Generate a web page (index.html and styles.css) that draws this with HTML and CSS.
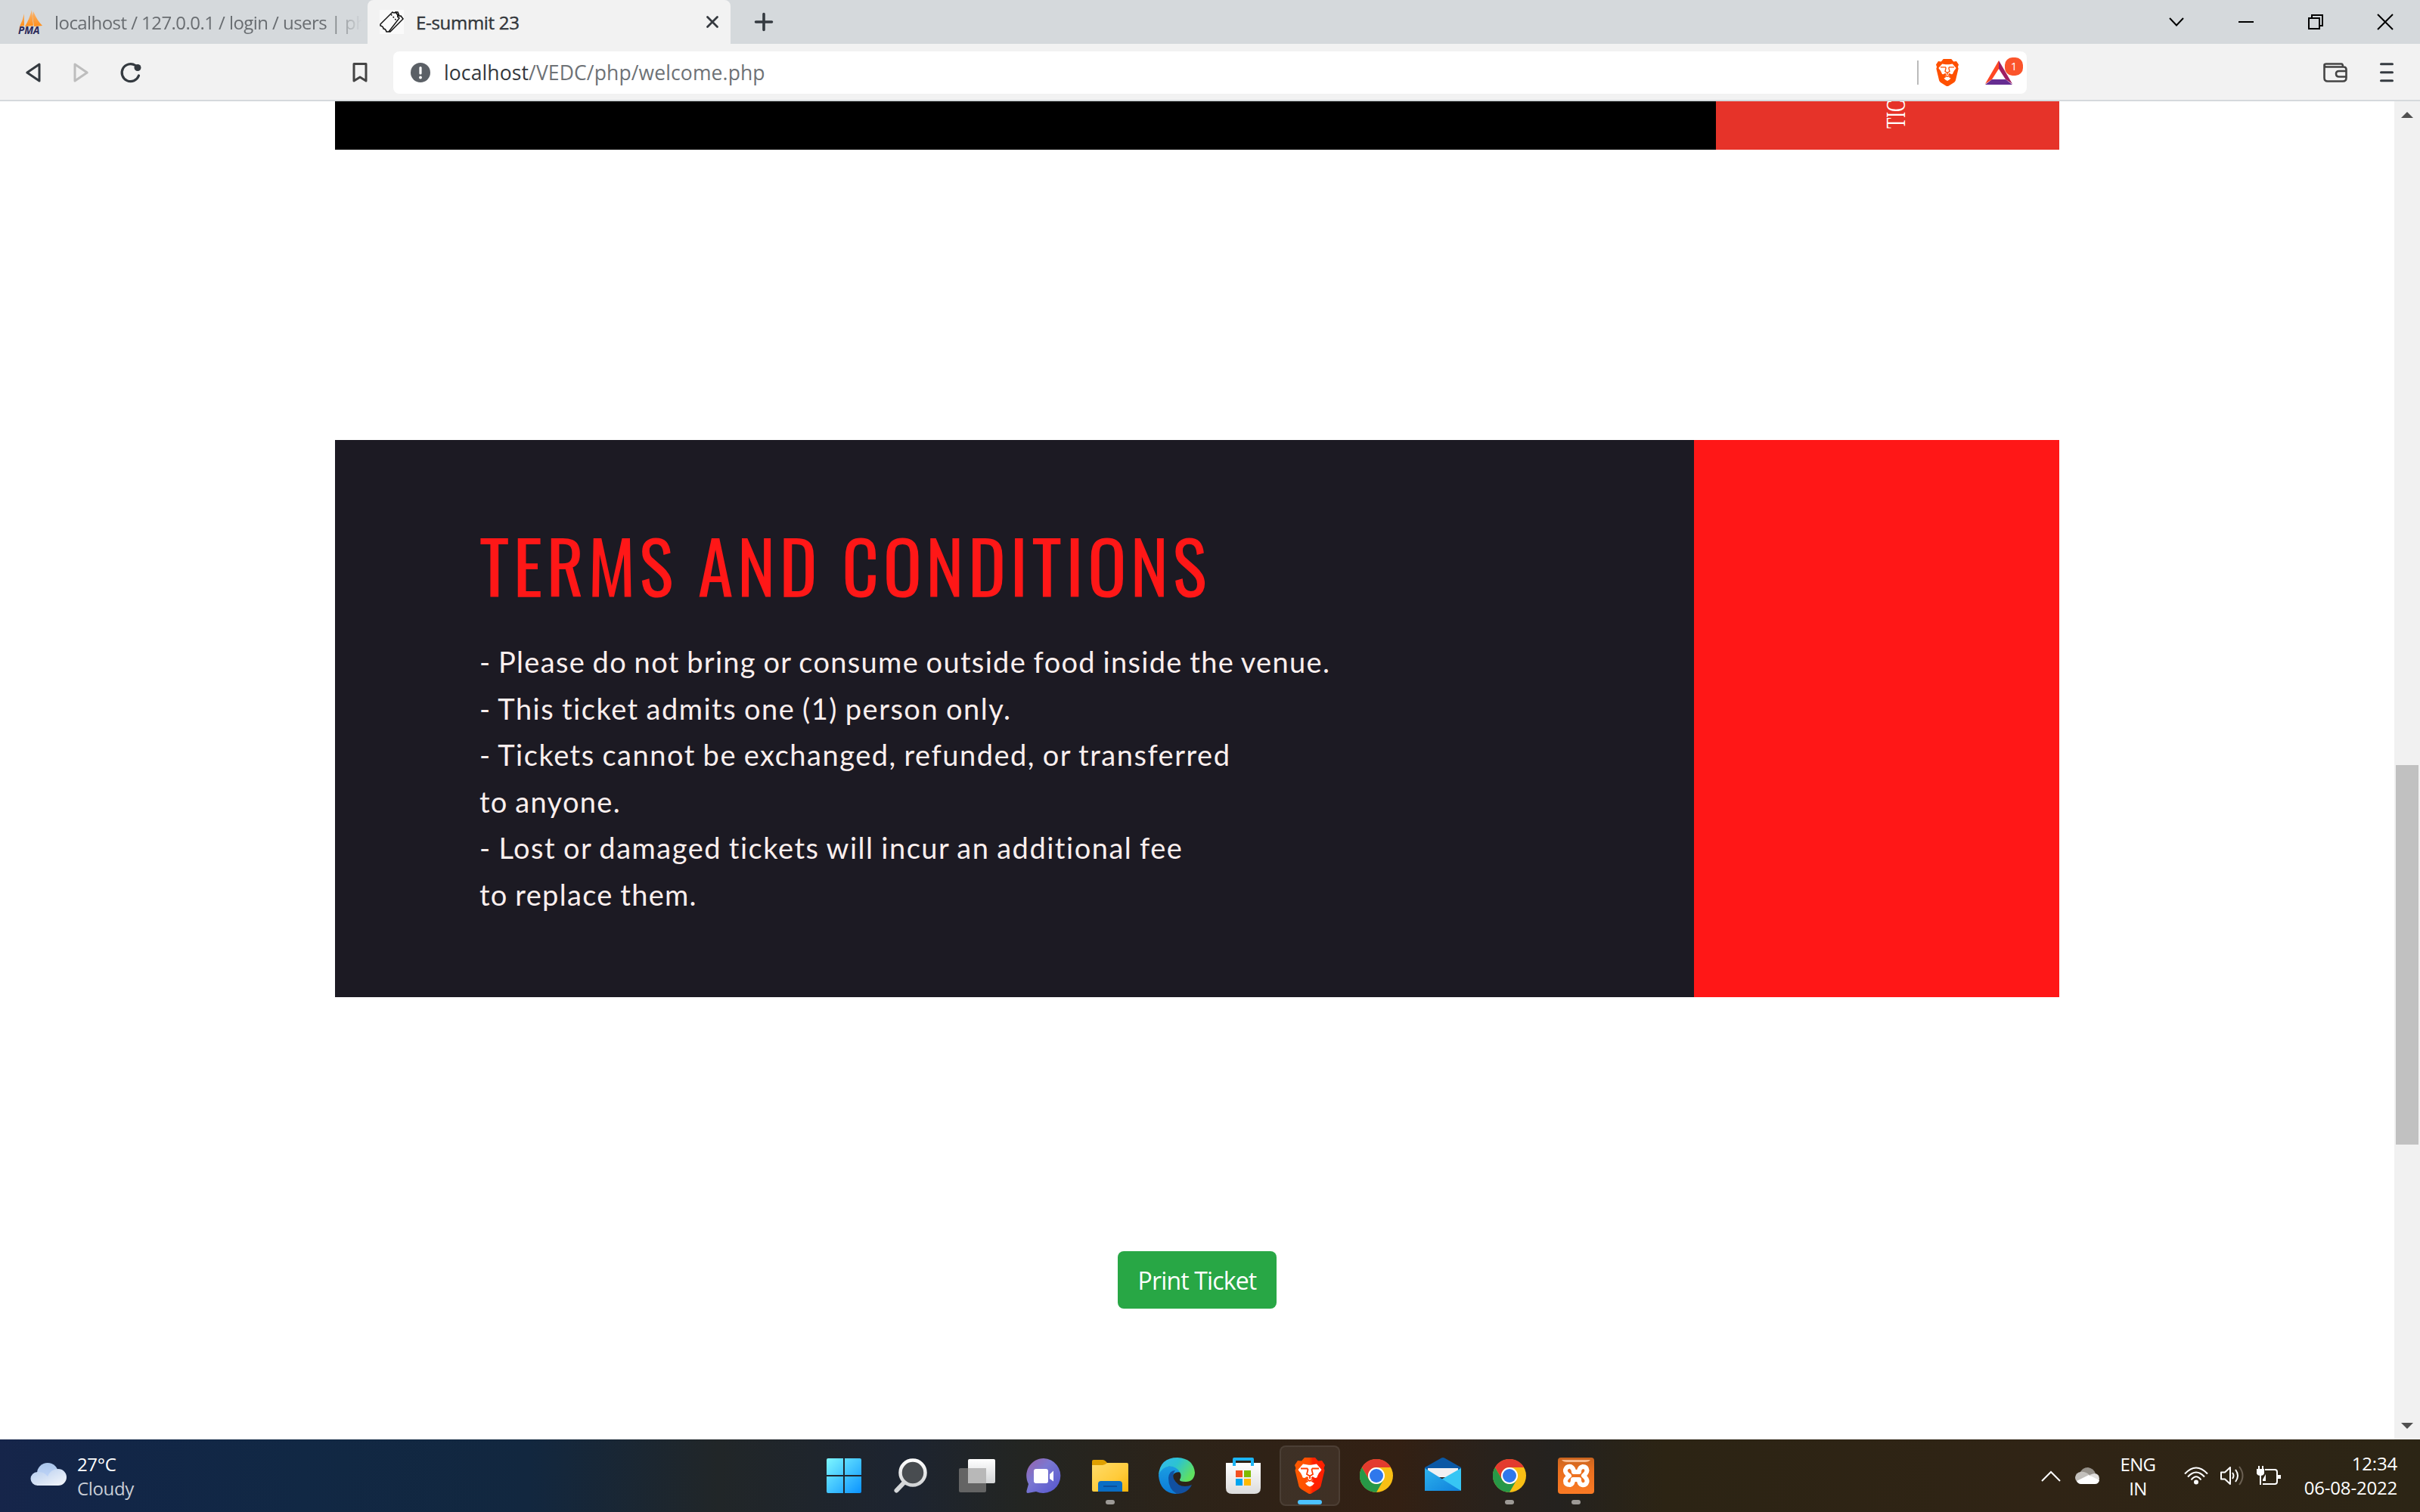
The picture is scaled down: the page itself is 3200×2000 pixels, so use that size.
FILE: index.html
```
<!DOCTYPE html>
<html lang="en">
<head>
<meta charset="utf-8">
<title>E-summit 23</title>
<link rel="stylesheet" href="styles.css">
</head>
<body>
<svg width="0" height="0" class="defs">
  <defs>
    <linearGradient id="gWin" x1="0" y1="0" x2="1" y2="1"><stop offset="0" stop-color="#7df7ff"/><stop offset="1" stop-color="#0a93ff"/></linearGradient>
    <linearGradient id="gLens" x1="0" y1="0" x2="0" y2="1"><stop offset="0" stop-color="#fff"/><stop offset="1" stop-color="#d2d4d6"/></linearGradient>
    <linearGradient id="gChat" x1="0" y1="0" x2="1" y2="1"><stop offset="0" stop-color="#9a61a8"/><stop offset=".4" stop-color="#7b78d2"/><stop offset="1" stop-color="#5354cf"/></linearGradient>
    <linearGradient id="gFold" x1="0" y1="0" x2="1" y2="1"><stop offset="0" stop-color="#ffdc6a"/><stop offset=".6" stop-color="#ffcb3a"/><stop offset="1" stop-color="#f9b40a"/></linearGradient>
    <linearGradient id="gEdgeTop" x1="0" y1="0" x2="1" y2=".5"><stop offset="0" stop-color="#35b8f1"/><stop offset=".5" stop-color="#2cc3d2"/><stop offset="1" stop-color="#5fe060"/></linearGradient>
    <linearGradient id="gEdgeBot" x1="0" y1="0" x2="0" y2="1"><stop offset="0" stop-color="#1b9de2"/><stop offset="1" stop-color="#0b7bd8"/></linearGradient>
    <linearGradient id="gBag" x1="0" y1="0" x2="0" y2="1"><stop offset="0" stop-color="#fff"/><stop offset="1" stop-color="#dcdcdc"/></linearGradient>
    <linearGradient id="gBrave" x1="0" y1="0" x2="1" y2="0"><stop offset="0" stop-color="#ff5a00"/><stop offset=".48" stop-color="#ff4d00"/><stop offset=".6" stop-color="#ff2000"/><stop offset="1" stop-color="#ff2000"/></linearGradient>
    <linearGradient id="gMail" x1="0" y1="0" x2="1" y2="1"><stop offset="0" stop-color="#2db2ec"/><stop offset="1" stop-color="#0f80dc"/></linearGradient>
    <linearGradient id="gXampp" x1="0" y1="0" x2="0" y2="1"><stop offset="0" stop-color="#c9641f"/><stop offset=".35" stop-color="#e96f1f"/><stop offset="1" stop-color="#fb7a24"/></linearGradient>
    <linearGradient id="gCloud" x1="0" y1="0" x2="1" y2="1"><stop offset="0" stop-color="#b3cbee"/><stop offset="1" stop-color="#f6f8fb"/></linearGradient>
    <linearGradient id="gCloudB" x1="0" y1="0" x2="0" y2="1"><stop offset="0" stop-color="#a9c5ea"/><stop offset="1" stop-color="#c9dbff"/></linearGradient>
    <linearGradient id="gSail" x1="0" y1="0" x2="0" y2="1"><stop offset="0" stop-color="#f8b877"/><stop offset="1" stop-color="#ff8f1c"/></linearGradient>
    <symbol id="lion" viewBox="0 0 40 48">
      <path d="M13 0H27L31 4.500L36 4L40 10L38.500 14L39.500 17L34.500 38Q33.500 40.500 31 42L22 47.500Q20 48.500 18 47.500L9 42Q6.500 40.500 5.500 38L.5 17L1.500 14L0 10L4 4L9 4.500Z"/>
      <path fill="#fff" d="M11 8.500L17 9.500Q20 10 23 9.500L29 8.500L35.500 16Q34.500 18 32 20.500L30 24.500Q30 27 27 27L23.500 25L21.500 27L24.500 29.500L20 32.500L15.500 29.500L18.500 27L16.500 25L13 27Q10 27 10 24.500L8 20.500Q5.500 18 4.500 16ZM20 30.500L26 34Q24 37 20 38.500Q16 37 14 34Z"/>
      <path fill="none" stroke="currentColor" stroke-width="1.800" d="M8 14.500L16.500 14.500L17.500 16L16 22L20 24.500L24 22L22.500 16L23.500 14.500L32 14.500M20 24V28M16 28.500L20 31L24 28.500"/>
    </symbol>
    <symbol id="chrome" viewBox="0 0 44 44">
      <circle cx="22" cy="22" r="22" fill="#f9bf14"/>
      <path fill="#e33b2e" d="M2.900 11A22 22 0 0 1 41.100 11H22A11 11 0 0 0 12.500 27.500Z"/>
      <path fill="#279847" d="M2.900 11A22 22 0 0 0 22 44L31.500 27.500A11 11 0 0 1 12.500 27.500Z"/>
      <circle cx="22" cy="22" r="11" fill="#fff"/><circle cx="22" cy="22" r="9" fill="#2f78ec"/>
    </symbol>
  </defs>
</svg>

<header class="tabstrip">
  <div class="tab tab-idle">
    <svg class="favicon" viewBox="0 0 32 32">
      <path fill="url(#gSail)" d="M7 5L7 21L1 22Q5 14 7 5ZM17 0L19 21L8 22Q14 12 17 0ZM19 2Q24 14 31 21L20 22L18 8ZM20 11L25 21L21 22Z"/>
    </svg>
    <span class="pma">PMA</span>
    <span class="tab-title faded">localhost / 127.0.0.1 / login / users | ph</span>
  </div>
  <div class="tab tab-active">
    <svg class="ticket-icon" viewBox="0 0 32 32" fill="none" stroke="#111" stroke-width="1.500">
      <path stroke="none" fill="#fafafa" d="M0 0H32V32H0Z"/>
      <path d="M1 19L17 3Q19 5 21 3L24 7Q23 10 26 11L12 29L9 29Q8 25 5 25Q5 22 1 21ZM24 7Q26 9 28 8L31 12L14 29H11M21 3L24 3L26 8"/>
      <path stroke-dasharray="2 2" d="M15 6L22 14"/>
    </svg>
    <span class="tab-title">E-summit 23</span>
    <svg class="tab-close" viewBox="0 0 16 16"><path d="M1.500 1.500L14.500 14.500M14.500 1.500L1.500 14.500" stroke="#35393f" stroke-width="2.800" stroke-linecap="round"/></svg>
  </div>
  <svg class="new-tab" viewBox="0 0 24 24"><path d="M12 1.500V22.500M1.500 12H22.500" stroke="#343a40" stroke-width="3.600" stroke-linecap="round"/></svg>
  <div class="window-buttons">
    <svg width="20" height="22" viewBox="0 0 20 22" fill="none" stroke="#000" stroke-width="2"><path d="M1 6L10 15.500L19 6"/></svg>
    <svg width="20" height="22" viewBox="0 0 20 22"><path d="M0 10H20V12H0Z"/></svg>
    <svg width="20" height="22" viewBox="0 0 20 22" fill="none" stroke="#000" stroke-width="2"><path d="M1 6H15V20H1ZM5 6V2H19V16H15"/></svg>
    <svg width="20" height="22" viewBox="0 0 20 22" stroke="#000" stroke-width="2"><path d="M0 1L20 21M20 1L0 21"/></svg>
  </div>
</header>

<nav class="toolbar">
  <div class="nav-buttons">
    <svg width="20" height="26" viewBox="0 0 20 26" fill="none" stroke="#343a40" stroke-width="3" stroke-linejoin="round"><path d="M18 2V24L1.800 13Z"/></svg>
    <svg width="20" height="26" viewBox="0 0 20 26" fill="none" stroke="#bdbdbd" stroke-width="3" stroke-linejoin="round"><path d="M2 2V24L18.200 13Z"/></svg>
    <svg width="28" height="26" viewBox="0 0 28 26"><path d="M20 3.500A11.500 11.500 0 1 0 24.500 17" fill="none" stroke="#343a40" stroke-width="3.200" stroke-linecap="round"/><circle cx="23" cy="6.500" r="4.500" fill="#343a40"/></svg>
  </div>
  <svg class="bookmark" viewBox="0 0 20 26" fill="none" stroke="#444" stroke-width="3" stroke-linejoin="round"><path d="M2 1.500H18V24L10 19L2 24Z"/></svg>
  <div class="address">
    <svg class="info" viewBox="0 0 26 26"><circle cx="13" cy="13" r="13" fill="#5b6066"/><path d="M13 6.500V14" stroke="#fff" stroke-width="3.200" stroke-linecap="round"/><circle cx="13" cy="19.500" r="1.900" fill="#fff"/></svg>
    <span class="url">localhost<span class="url-path">/VEDC/php/welcome.php</span></span>
    <span class="divider"></span>
    <svg class="shield" viewBox="0 0 40 48" fill="#ff5000" color="#ff5000"><use href="#lion"/></svg>
    <div class="rewards">
      <svg width="36" height="32" viewBox="0 0 36 32"><path fill="#ff4724" d="M18 0L0 31L9 25L18 11Z"/><path fill="#9e1f63" d="M18 0L36 31L27 25L18 11Z"/><path fill="#662d91" d="M0 32L9 25H27L36 32Z"/></svg>
      <span class="badge">1</span>
    </div>
  </div>
  <svg class="wallet" viewBox="0 0 32 26" fill="none" stroke="#444" stroke-width="2.600" stroke-linejoin="round"><path d="M1.500 3V20Q1.500 24.500 6 24.500H26Q30.500 24.500 30.500 20V9Q30.500 5.500 27 5.500H3.500Q1.500 5 1.500 3Q1.500 1.500 4 1.500H24Q26 1.500 26 5M30.500 11H21Q17 11 17 14.500Q17 18.500 21 18.500H30.500"/></svg>
  <svg class="menu" viewBox="0 0 18 26"><path d="M1.500 1.800H16.500M1.500 12.800H16.500M1.500 23.800H16.500" stroke="#343a40" stroke-width="3" stroke-linecap="round"/></svg>
</nav>

<div class="viewport">
  <main class="page">
    <section class="ticket-front">
      <div class="ticket-stub"><span class="stub-text">TICKET</span></div>
    </section>
    <section class="ticket-back">
      <div class="terms">
        <h1 class="terms-title">TERMS AND CONDITIONS</h1>
        <p class="line wide-line">- Please do not bring or consume outside food inside the venue.</p>
        <p class="line">- This ticket admits one (1) person only.</p>
        <p class="line">- Tickets cannot be exchanged, refunded, or transferred</p>
        <p class="line wide-line">to anyone.</p>
        <p class="line">- Lost or damaged tickets will incur an additional fee</p>
        <p class="line wide-line">to replace them.</p>
      </div>
    </section>
    <button class="print">Print Ticket</button>
  </main>
  <aside class="scrollbar">
    <svg width="16" height="8" viewBox="0 0 16 8"><path fill="#505050" d="M0 8L8 0L16 8Z"/></svg>
    <div class="thumb"></div>
    <svg width="16" height="8" viewBox="0 0 16 8"><path fill="#505050" d="M0 0L8 8L16 0Z"/></svg>
  </aside>
</div>

<footer class="taskbar">
  <div class="weather">
    <svg width="48" height="30" viewBox="0 0 48 30"><circle cx="23" cy="14" r="14" fill="url(#gCloudB)"/><path fill="url(#gCloud)" d="M9.500 30A9 9 0 0 1 9.500 12Q18 11 23 18Q27 8 37 8A11 11 0 0 1 37 30Z"/></svg>
    <div class="stack"><span>27°C</span><span class="dim">Cloudy</span></div>
  </div>
  <div class="apps">
    <div class="app"><svg width="46" height="46" viewBox="0 0 46 46"><path fill="url(#gWin)" d="M2 0H22V22H0V2Q0 0 2 0ZM24 0H44Q46 0 46 2V22H24ZM0 24H22V46H2Q0 46 0 44ZM24 24H46V44Q46 46 44 46H24Z"/></svg></div>
    <div class="app"><svg width="46" height="46" viewBox="0 0 46 46"><path d="M4.500 42.500L14 32.500" stroke="#d5d7d9" stroke-width="6" stroke-linecap="round"/><circle cx="26" cy="19" r="16.500" fill="#484c50" stroke="url(#gLens)" stroke-width="4.500"/></svg></div>
    <div class="app"><svg width="48" height="44" viewBox="0 0 48 44"><rect x="12" width="36" height="32" rx="2" fill="url(#gLens)"/><rect y="12" width="36" height="32" rx="2" fill="#646464"/><path fill="#b8b8b8" d="M12 12H36V32H12Z"/></svg></div>
    <div class="app"><svg width="46" height="46" viewBox="0 0 46 46"><path fill="url(#gChat)" d="M23 0A23 23 0 1 1 13 44L2 46Q0 46 .5 43L3 34A23 23 0 0 1 23 0Z"/><rect x="10" y="14" width="19" height="19" rx="3" fill="#fff"/><path fill="#fff" d="M31 21L36 16.500V30.500L31 27Z"/></svg></div>
    <div class="app"><svg width="48" height="44" viewBox="0 0 48 44"><path fill="#dfa000" d="M2 1H14Q17 1 20 5H30V14H0V3Q0 1 2 1Z"/><path fill="url(#gFold)" d="M0 8H14Q17 8 20 5H46Q48 5 48 7V43H2Q0 43 0 41Z"/><path fill="#0a6dc4" d="M8 43V33Q8 29 12 29H36Q40 29 40 33V43Z"/><path d="M15 36H33" stroke="#0b4f9c" stroke-width="2"/></svg><i class="pill"></i></div>
    <div class="app"><svg width="48" height="48" viewBox="0 0 48 48"><path fill="url(#gEdgeBot)" d="M0 24Q1 11 17 11Q28 12 31 20Q20 17 18 26Q19 40 34 42Q29 48 22 48Q2 46 0 24Z"/><path fill="#1150a0" d="M13 27Q14 17 22 17Q18 22 20 28Q25 38 35 38Q40 38 44 36Q38 48 24 48Q13 42 13 27Z"/><path fill="url(#gEdgeTop)" d="M0 23Q2 0 25 0Q46 1 48 20Q47 32 36 32Q27 32 28 29Q31 24 28 19Q23 11 14 11.500Q4 13 0 23Z"/></svg></div>
    <div class="app"><svg width="46" height="48" viewBox="0 0 46 48"><path fill="url(#gBag)" d="M0 7H46V40Q46 48 38 48H8Q0 48 0 40Z"/><path d="M11 11V2H35V11" fill="none" stroke="#1cb5f5" stroke-width="4" stroke-linejoin="round"/><path fill="#f25022" d="M13 17H22V26H13Z"/><path fill="#7fba00" d="M24 17H33V26H24Z"/><path fill="#00a4ef" d="M13 28H22V37H13Z"/><path fill="#ffb900" d="M24 28H33V37H24Z"/></svg></div>
    <div class="app current"><svg width="40" height="48" viewBox="0 0 40 48" fill="url(#gBrave)" color="#ff3d00"><use href="#lion"/></svg><i class="pill wide"></i></div>
    <div class="app"><svg width="44" height="44"><use href="#chrome"/></svg></div>
    <div class="app"><svg class="mail" width="48" height="44" viewBox="0 0 48 44"><path fill="#0b58a5" d="M0 13L22 .6Q24 -.4 26 .6L48 13V20H0Z"/><path fill="#f0f0f2" d="M4 14H44V26H4Z"/><path fill="#37c6f4" d="M48 14V44L20 30Z"/><path fill="url(#gMail)" d="M0 14L48 44H0Z"/></svg></div>
    <div class="app"><svg width="44" height="44"><use href="#chrome"/></svg><i class="pill"></i></div>
    <div class="app"><svg width="48" height="48" viewBox="0 0 48 48"><rect width="48" height="48" rx="4" fill="url(#gXampp)"/><path fill="#f8b98c" d="M5 3H43Q41 6 36 6H12Q7 6 5 3Z"/><path d="M15 24Q9 20 10 16Q12 11 17 12Q21 14 21 19H28Q28 13 33 12Q38 12 38.500 17Q38 21 34 24Q39 28 38.500 32Q37 37 32 36Q28 35 28 29H20Q20 35 16 36Q10 36 10 31Q10 28 15 24Z" fill="none" stroke="#fff" stroke-width="6" stroke-linejoin="round"/></svg><i class="pill"></i></div>
  </div>
  <div class="tray">
    <svg class="t-up" width="26" height="15" viewBox="0 0 26 15"><path d="M1 14L13 2L25 14" fill="none" stroke="#fff" stroke-width="2"/></svg>
    <svg class="t-cloud" width="32" height="22" viewBox="0 0 32 22"><path fill="#96918a" d="M6 8Q9 0 17 0Q24 1 27 8L14 14Z"/><path fill="#c3c0bc" d="M7 6Q13 5 19 10L3 19Q0 17 0 13Q1 7 7 6Z"/><path fill="#e2e0de" d="M19 10Q24 8 26 8Q32 9 32 15Q31 20 27 19Z"/><path fill="#fff" d="M18 10L32 17Q31 22 26 22H7Q3 21 2 18Z"/></svg>
    <div class="stack lang"><span>ENG</span><span>IN</span></div>
    <svg class="t-wifi" width="32" height="24" viewBox="0 0 32 24" fill="none" stroke="#fff" stroke-width="2"><path d="M1 9.500Q16 -6.500 31 9.500M5 13.500Q16 1.500 27 13.500M9.500 17.500Q16 9 22.500 17.500"/><circle cx="16" cy="20.500" r="2" fill="#fff"/></svg>
    <svg class="t-sound" width="34" height="30" viewBox="0 0 34 30" fill="none" stroke="#fff" stroke-width="2" stroke-linejoin="round"><path d="M2 10.500H7L14 4V26L7 19.500H2ZM17 11Q20 15 17 19M21 7Q27 15 21 23"/><path stroke="#6a6052" d="M26 3Q35 15 26 27"/></svg>
    <svg class="t-power" width="32" height="26" viewBox="0 0 32 26" fill="none" stroke="#fff" stroke-width="2"><path d="M11 5H24Q27 5 27 8V21Q27 24 24 24H8M5 12V25M3 0V5M8 0V5"/><path fill="#fff" stroke="none" d="M0 4H10V10Q9 13 5 13Q1 13 0 10ZM8 18L12 11V20H8ZM28 12H32V17H28Z"/></svg>
    <div class="stack clock"><span>12:34</span><span>06-08-2022</span></div>
  </div>
</footer>
</body>
</html>
```
FILE: styles.css
```
* { box-sizing: border-box; }
body {
  margin: 0;
  width: 3200px;
  height: 2000px;
  display: flex;
  flex-direction: column;
  overflow: hidden;
  background: #fff;
  font-family: "Open Sans", "Noto Sans", sans-serif;
  font-size: 24px;
}
svg { display: block; flex: none; overflow: visible; }
.defs { position: absolute; }

/* Tab strip */
.tabstrip { flex: none; height: 58px; display: flex; align-items: center; background: #d5d9dc; }
.tab { height: 58px; display: flex; align-items: center; position: relative; white-space: nowrap; }
.tab-idle { width: 486px; padding: 0 8px 0 25px; color: #696d71; }
.favicon { width: 32px; height: 32px; }
.pma {
  position: absolute;
  left: 24px;
  top: 33px;
  color: #2c2a5a;
  font: italic bold 13.500px/15px "Open Sans", sans-serif;
}
.tab-title { line-height: 32px; padding-top: 1px; }
.faded {
  width: 408px;
  margin-left: 15px;
  overflow: hidden;
  letter-spacing: -.56px;
  -webkit-mask-image: linear-gradient(90deg, #000 89%, transparent);
  mask-image: linear-gradient(90deg, #000 89%, transparent);
}
.tab-active { width: 480px; padding: 0 16px; background: #f2f2f2; border-radius: 8px 8px 0 0; color: #33373c; }
.tab-active .tab-title { margin-left: 16px; letter-spacing: -.3px; -webkit-text-stroke: .4px #33373c; }
.ticket-icon { width: 32px; height: 32px; }
.tab-close { width: 16px; height: 16px; margin-left: auto; }
.new-tab { width: 24px; height: 24px; margin-left: 32px; }
.window-buttons { display: flex; gap: 72px; margin-left: auto; padding-right: 36px; }

/* Toolbar */
.toolbar { flex: none; height: 76px; padding-top: 1px; display: flex; align-items: center; background: #f2f2f2; border-bottom: 2px solid #d5d9dc; }
.nav-buttons { display: flex; gap: 43px; margin-left: 34px; }
.nav-buttons svg:last-child { margin-left: -1px; }
.bookmark { width: 20px; height: 26px; margin-left: 279px; }
.address { width: 2160px; height: 56px; margin-left: 34px; padding: 0 6px 0 23px; display: flex; align-items: center; background: #fff; border-radius: 8px; }
.info { width: 26px; height: 26px; }
.url { margin-left: 18px; padding-top: 1px; font-size: 26.500px; color: #33373c; letter-spacing: .12px; }
.url-path { color: #6e7276; }
.divider { width: 2px; height: 32px; margin-left: auto; background: #bbb; }
.shield { width: 32px; height: 36px; margin-left: 22px; }
.rewards { position: relative; width: 49px; margin-left: 34px; }
.badge {
  position: absolute;
  left: 26px;
  top: -4px;
  width: 24px;
  height: 24px;
  border-radius: 10px;
  background: #fb542b;
  color: #fff;
  font-size: 15px;
  line-height: 23px;
  text-align: center;
}
.wallet { width: 32px; height: 26px; margin-left: 392px; }
.menu { width: 18px; height: 26px; margin-left: 43px; }

/* Page */
.viewport { flex: 1; min-height: 0; display: flex; }
.page { width: 3166px; padding: 0 443px; display: flex; flex-direction: column; align-items: center; }
.ticket-front { width: 2280px; height: 64px; display: flex; justify-content: flex-end; background: #000; overflow: hidden; }
.ticket-stub { position: relative; width: 454px; background: #e63329; }
.stub-text {
  position: absolute;
  left: 220px;
  top: 36px;
  transform-origin: 0 0;
  transform: rotate(-90deg) scaleX(.65);
  font: 36px/36px "Liberation Serif", serif;
  color: #fff;
}
.ticket-back { width: 2280px; height: 737px; margin-top: 384px; background: linear-gradient(90deg, #1c1a23 1797px, #ff1717 1797px); }
.terms { padding: 94px 0 0 191px; }
.terms-title {
  margin: 0 0 29px;
  font: 400 95px/140px Oswald, sans-serif;
  letter-spacing: 5.450px;
  color: #ff1717;
  white-space: nowrap;
}
.line { margin: 0; font: 38px/61.500px Lato, sans-serif; letter-spacing: 1.520px; word-spacing: -1.500px; color: #fbefee; white-space: nowrap; }
.wide-line { letter-spacing: 1.320px; }
.print {
  width: 210px;
  height: 76px;
  margin-top: 336px;
  padding: 1px 0 0;
  border: 0;
  border-radius: 8px;
  background: #28a745;
  color: #fff;
  font: 32px/75px "Open Sans", sans-serif;
  letter-spacing: -.85px;
}

.scrollbar { width: 34px; display: flex; flex-direction: column; align-items: center; padding: 14px 0 14px; background: #f1f1f1; }
.thumb { width: 30px; height: 502px; margin: 856px 0 auto; background: #c1c1c1; }

/* Taskbar */
.taskbar {
  flex: none;
  position: relative;
  height: 96px;
  display: flex;
  color: #fff;
  background: linear-gradient(90deg, #16254a 0, #122647 150px, #112844 400px, #12273f 700px, #212628 950px, #1d2430 1200px, #232522 1350px, #2d2318 1580px, #332013 1850px, #29221c 1970px, #24221f 2060px, #2c2414 2200px, #302415 2700px, #2c2515 3200px);
}
.weather { width: 1076px; display: flex; align-items: center; padding-left: 40px; gap: 14px; }
.weather svg { margin-top: -4px; }
.stack { display: flex; flex-direction: column; padding-top: 2px; line-height: 32px; letter-spacing: -.7px; }
.weather .stack { letter-spacing: -.35px; }
.dim { color: #c9ced6; }
.apps { display: flex; gap: 8px; align-items: center; }
.app { position: relative; width: 80px; height: 80px; display: flex; align-items: center; justify-content: center; }
.current { background: rgba(255,255,255,.07); border: 2px solid rgba(255,255,255,.07); border-radius: 8px; }
.mail { margin-top: -4px; }
.pill { position: absolute; left: 50%; bottom: 2px; width: 12px; height: 6px; margin-left: -6px; border-radius: 3px; background: #9d9a96; }
.wide { width: 32px; margin-left: -16px; bottom: 0; background: #4cc2ff; }
.tray { flex: 1; display: flex; align-items: center; padding-left: 575px; }
.t-cloud { margin-left: 19px; }
.lang { width: 76px; margin-left: 13px; align-items: center; }
.t-wifi { margin-left: 23px; }
.t-sound { margin-left: 15px; }
.t-power { margin-left: 15px; }
.clock { margin-left: auto; margin-top: -3px; padding-right: 30px; text-align: right; letter-spacing: -.2px; }
```
